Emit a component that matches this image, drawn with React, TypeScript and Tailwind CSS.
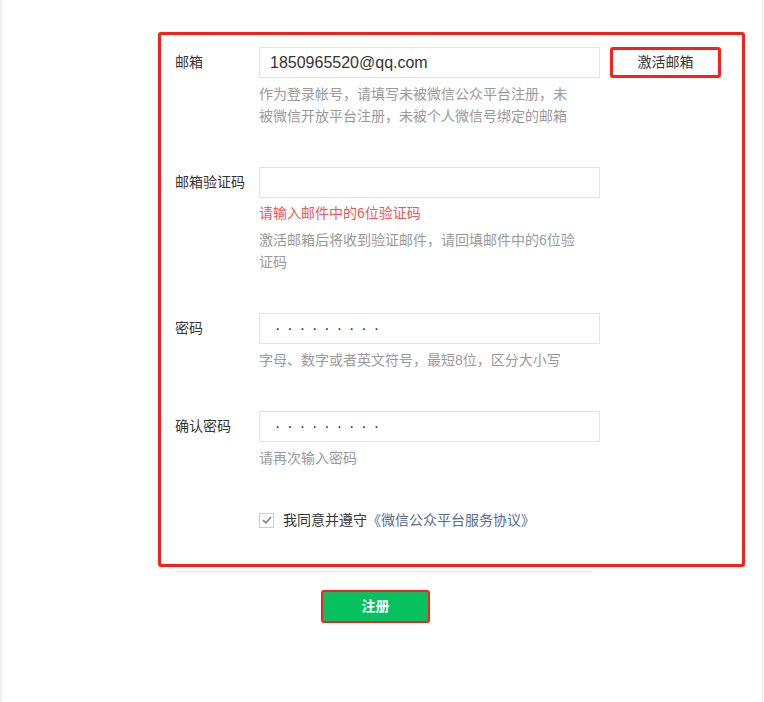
import React from 'react';

const FONT = { fontFamily: '"Liberation Sans", "Noto Sans CJK SC", sans-serif' };

const Label: React.FC<{ text: string }> = ({ text }) => (
  <div className="w-[84px] shrink-0 h-[31px] flex items-center text-[14px] text-[#353535]">{text}</div>
);

const Help: React.FC<{ children: React.ReactNode }> = ({ children }) => (
  <div className="mt-[5px] w-[320px] text-[14px] leading-[22px] text-[#9a9a9a]">{children}</div>
);

const Dots = () => (
  <div className="h-[31px] w-[341px] border border-[#e4e4e4] bg-white pl-[15px] flex items-center text-[16px] text-[#333] tracking-[7px]">
    ·········
  </div>
);

const App: React.FC = () => {
  return (
    <div className="min-h-[702px] w-[764px] flex bg-white" style={FONT}>
      {/* left strip */}
      <div className="w-[2px] shrink-0 bg-[#f0f0f0]" />

      <main className="w-[761px] border-r border-[#e6e6e6] pt-8 pl-[156px]">
        {/* form box */}
        <div className="w-[587px] border-[3px] border-[#f8201a] rounded-[3px] pt-3 pb-[33px] pl-[14px]">
          {/* email */}
          <div className="flex mb-10">
            <Label text="邮箱" />
            <div>
              <div className="flex items-center gap-[10px]">
                <div className="h-[31px] w-[341px] border border-[#e4e4e4] pl-[10px] flex items-center text-[16px] text-[#353535]">
                  1850965520@qq.com
                </div>
                <button className="h-[31px] w-[111px] border-[3px] border-[#f8201a] rounded-[3px] bg-white text-[14px] text-[#353535]">
                  激活邮箱
                </button>
              </div>
              <Help>作为登录帐号，请填写未被微信公众平台注册，未被微信开放平台注册，未被个人微信号绑定的邮箱</Help>
            </div>
          </div>

          {/* verification code */}
          <div className="flex mb-10">
            <Label text="邮箱验证码" />
            <div>
              <div className="h-[31px] w-[341px] border border-[#e4e4e4] bg-white" />
              <div className="mt-1 text-[14px] leading-[22px] text-[#fa5151]">请输入邮件中的6位验证码</div>
              <Help>激活邮箱后将收到验证邮件，请回填邮件中的6位验证码</Help>
            </div>
          </div>

          {/* password */}
          <div className="flex mb-10">
            <Label text="密码" />
            <div>
              <Dots />
              <Help>字母、数字或者英文符号，最短8位，区分大小写</Help>
            </div>
          </div>

          {/* confirm */}
          <div className="flex">
            <Label text="确认密码" />
            <div>
              <Dots />
              <Help>请再次输入密码</Help>
            </div>
          </div>

          {/* agreement */}
          <div className="mt-10 pl-[84px] flex items-center gap-[9px] h-[22px]">
            <span className="w-[15px] h-[15px] border border-[#cfcfcf] bg-white flex items-center justify-center">
              <svg width="10" height="8" viewBox="0 0 10 8">
                <path d="M1 4.2 L3.8 6.8 L9 1.2" fill="none" stroke="#8a8a8a" strokeWidth="1.8" />
              </svg>
            </span>
            <span className="text-[14px] text-[#353535]">
              我同意并遵守<span className="text-[#576b95]">《微信公众平台服务协议》</span>
            </span>
          </div>
        </div>

        {/* divider */}
        <div className="mt-[4px] ml-[17px] w-[417px] h-px bg-[#e4e4e4]" />

        {/* submit */}
        <div className="mt-[18px] ml-[163px]">
          <button className="w-[109px] h-[33px] border-2 border-[#f8201a] rounded-[3px] bg-[#07c160] text-white text-[14px] font-bold">
            注册
          </button>
        </div>
      </main>
    </div>
  );
};

export default App;
